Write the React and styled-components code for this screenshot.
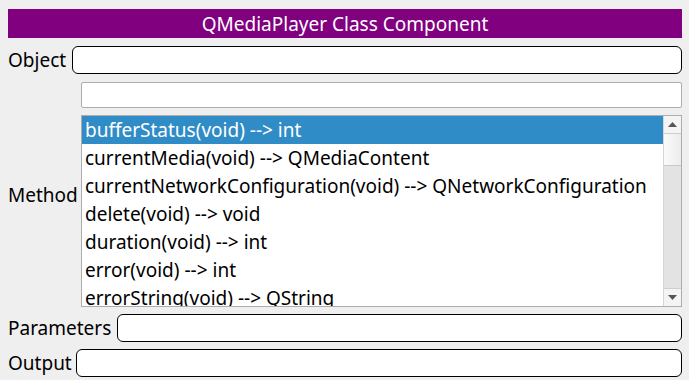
import React from "react";
import styled, { createGlobalStyle } from "styled-components";

const Global = createGlobalStyle`
  html, body { margin: 0; padding: 0; background: #efefef; }
  body { font-family: "Noto Sans", "Open Sans", sans-serif; color: #000; }
`;

const Page = styled.div`
  width: 689px;
  height: 380px;
  box-sizing: border-box;
  padding: 9px 7px 0 8px;
  display: flex;
  flex-direction: column;
`;

const Header = styled.div`
  height: 29px;
  background: #800080;
  color: #fff;
  font-size: 19px;
  display: flex;
  align-items: center;
  justify-content: center;
  margin-bottom: 8px;
`;

const Row = styled.div`
  display: flex;
  align-items: center;
  gap: ${(p) => p.gap ?? 5}px;
  margin-bottom: ${(p) => p.mb ?? 0}px;
`;

const Label = styled.div`
  font-size: 19px;
  line-height: 22px;
  white-space: nowrap;
`;

const RoundInput = styled.div`
  flex: 1;
  height: 28px;
  box-sizing: border-box;
  background: #fff;
  border: 1.5px solid #000;
  border-radius: 6px;
`;

const PlainInput = styled.div`
  height: 26px;
  box-sizing: border-box;
  background: #fff;
  border: 1px solid #adadad;
  border-radius: 2px;
`;

const MethodBlock = styled.div`
  display: grid;
  grid-template-columns: 73px 1fr;
  align-items: center;
  margin-bottom: 7px;
`;

const Stack = styled.div`
  display: flex;
  flex-direction: column;
  gap: 7px;
`;

const List = styled.div`
  height: 192px;
  box-sizing: border-box;
  background: #fff;
  border: 1px solid #adadad;
  display: flex;
  overflow: hidden;
`;

const Items = styled.div`
  flex: 1;
  min-width: 0;
  overflow: hidden;
`;

const Item = styled.div`
  height: 28px;
  line-height: 28px;
  padding-left: 3px;
  font-size: 19px;
  white-space: nowrap;
  background: ${(p) => (p.selected ? "#308cc6" : "transparent")};
  color: ${(p) => (p.selected ? "#fff" : "#000")};
`;

const ScrollBar = styled.div`
  width: 17px;
  flex: none;
  display: flex;
  flex-direction: column;
  border-left: 1px solid #d6d6d6;
  background: #e3e3e3;
`;

const ArrowBtn = styled.div`
  height: 17px;
  background: #f4f4f4;
  display: flex;
  align-items: center;
  justify-content: center;
  border-bottom: ${(p) => (p.top ? "1px solid #cfcfcf" : "none")};
  border-top: ${(p) => (p.top ? "none" : "1px solid #cfcfcf")};
`;

const Handle = styled.div`
  height: 31px;
  background: linear-gradient(to right, #fafafa, #ececec);
  border-bottom: 1px solid #c9c9c9;
`;

const Track = styled.div`
  flex: 1;
`;

const Arrow = ({ up }) => (
  <svg width="9" height="5" viewBox="0 0 9 5">
    <polygon points={up ? "0,5 9,5 4.5,0" : "0,0 9,0 4.5,5"} fill="#555" />
  </svg>
);

const methods = [
  "bufferStatus(void) --> int",
  "currentMedia(void) --> QMediaContent",
  "currentNetworkConfiguration(void) --> QNetworkConfiguration",
  "delete(void) --> void",
  "duration(void) --> int",
  "error(void) --> int",
  "errorString(void) --> QString",
];

export default function App() {
  return (
    <>
      <Global />
      <Page>
        <Header>QMediaPlayer Class Component</Header>
        <Row mb={8} gap={6}>
          <Label>Object</Label>
          <RoundInput />
        </Row>
        <MethodBlock>
          <Label>Method</Label>
          <Stack>
            <PlainInput />
            <List>
              <Items>
                {methods.map((m, i) => (
                  <Item key={m} selected={i === 0}>
                    {m}
                  </Item>
                ))}
              </Items>
              <ScrollBar>
                <ArrowBtn top>
                  <Arrow up />
                </ArrowBtn>
                <Handle />
                <Track />
                <ArrowBtn>
                  <Arrow />
                </ArrowBtn>
              </ScrollBar>
            </List>
          </Stack>
        </MethodBlock>
        <Row mb={7} gap={6}>
          <Label>Parameters</Label>
          <RoundInput />
        </Row>
        <Row gap={4}>
          <Label>Output</Label>
          <RoundInput />
        </Row>
      </Page>
    </>
  );
}
